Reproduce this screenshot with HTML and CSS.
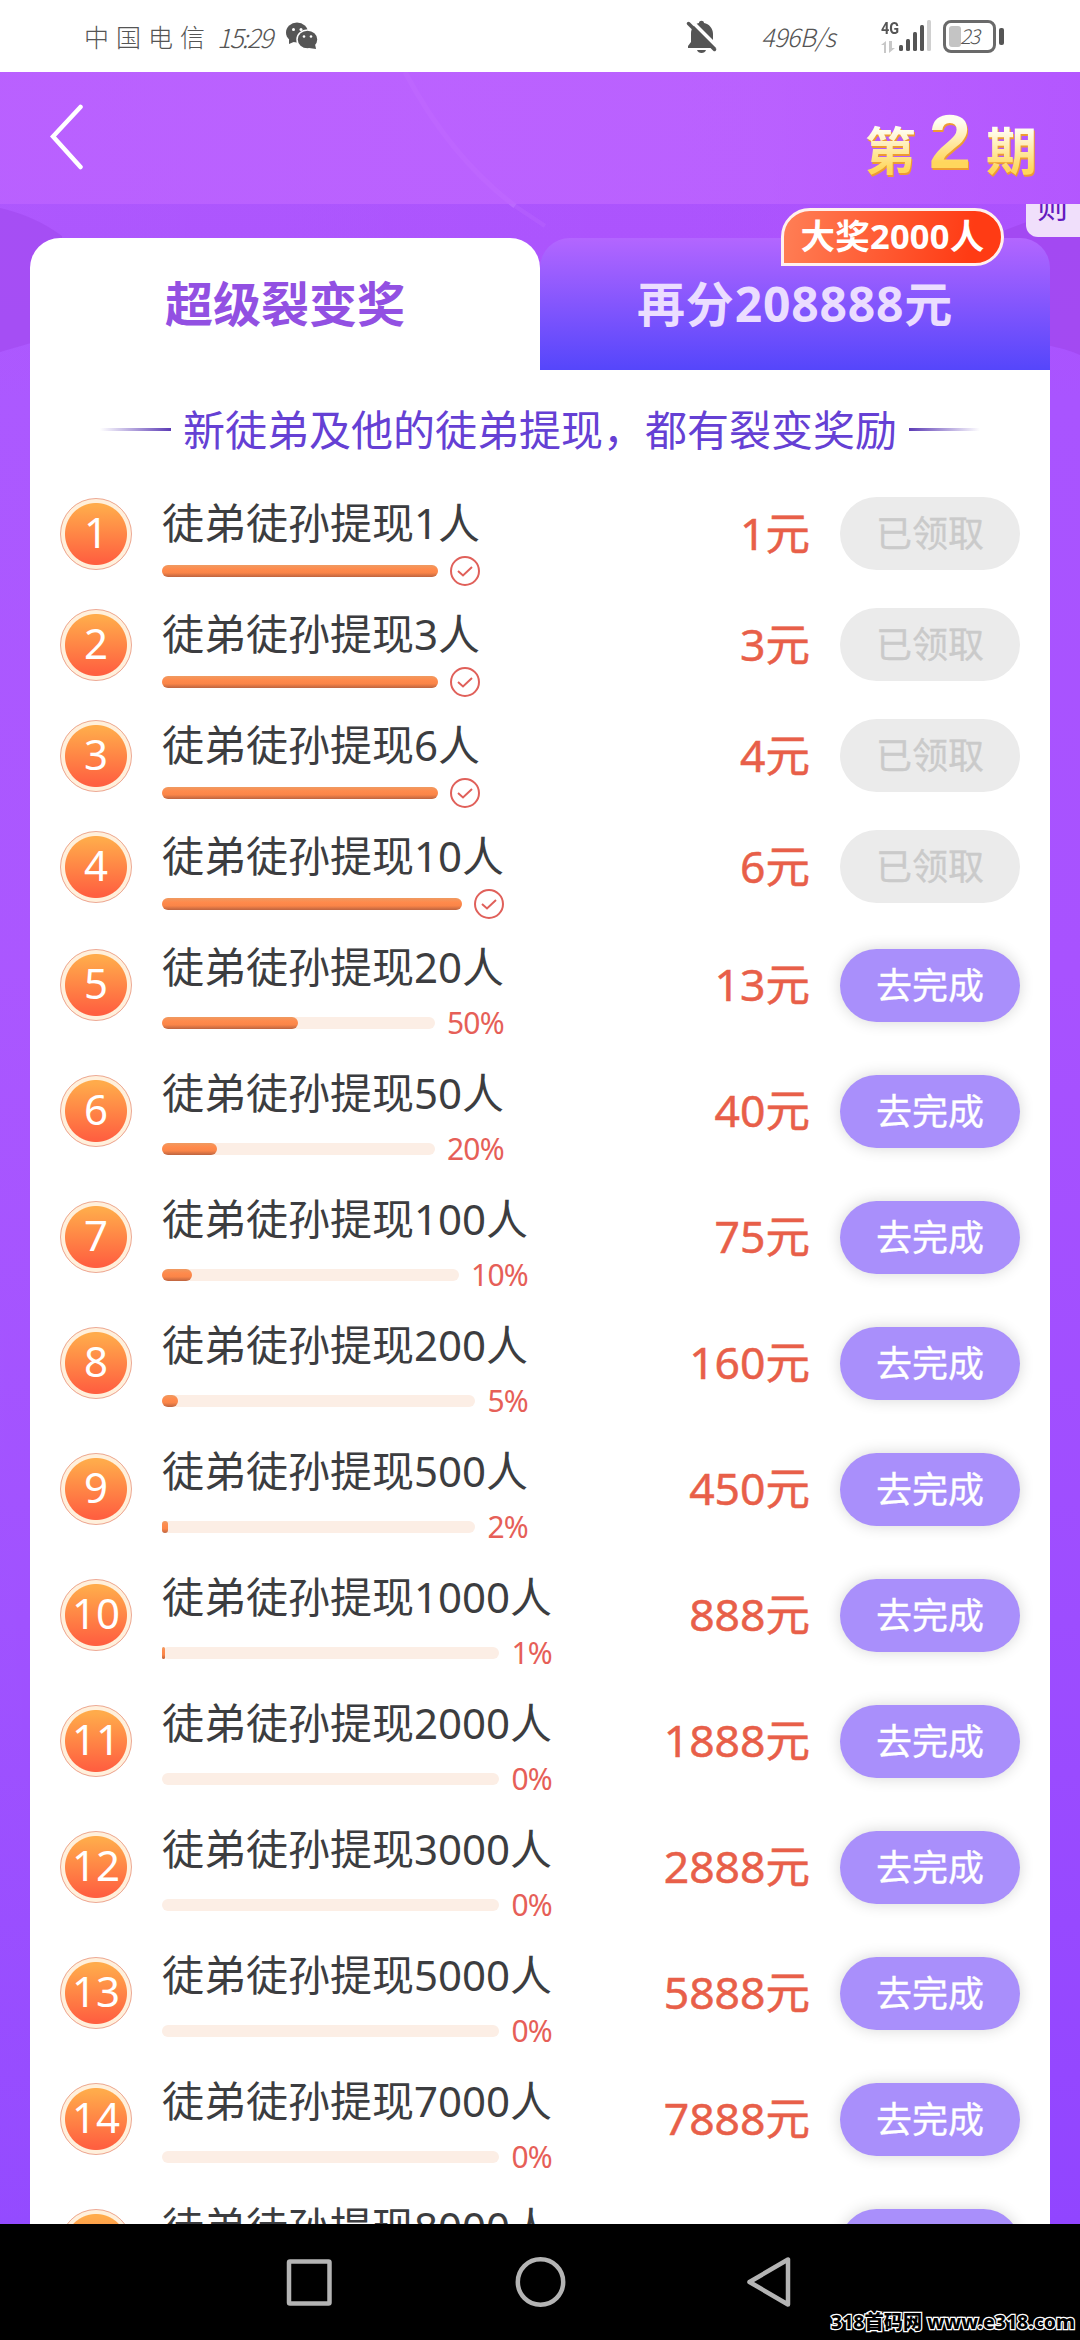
FILE: index.html
```html
<!DOCTYPE html>
<html lang="zh-CN">
<head>
<meta charset="utf-8">
<title>超级裂变奖</title>
<link rel="stylesheet" href="styles.css">
</head>
<body>
<div class="phone">
  <header class="status">
    <span class="carrier">中国电信</span><span class="clock">15:29</span>
    <svg class="wechat" width="34" height="28" viewBox="0 0 34 28"><ellipse cx="12" cy="10.5" rx="11" ry="10"/><path d="M4 17l0 5 7-3z"/><ellipse cx="22.500" cy="17.500" rx="10.500" ry="9.500" stroke="#fff" stroke-width="1.500"/><path d="M24 26l7 1-1-5z"/><g fill="#fff"><circle cx="8.500" cy="7.500" r="1.500"/><circle cx="16" cy="7.500" r="1.500"/><circle cx="19" cy="14.500" r="1.300"/><circle cx="26" cy="14.500" r="1.300"/></g></svg>
    <svg class="bell" width="32" height="34" viewBox="0 0 32 34"><path d="M13 3c0-3 5-3 5 0 5 1 9 5 9 11v8l3 4v2H2v-2l3-4v-8c0-6 3-10 8-11z"/><path d="M11 30h9c-1 4-8 4-9 0z"/><path d="M5.500 1l27 27" stroke="#fff" stroke-width="3.500"/><path d="M2.500 3.500l26 26" stroke="#555" stroke-width="3.500" stroke-linecap="round"/></svg>
    <span class="speed">496B/s</span>
    <span class="net"><b>4G</b><svg width="14" height="12" viewBox="0 0 14 12" fill="#c8c8c8"><path d="M3 12V4H0l5-4v12zM8 0v12l6-5h-3V0z"/></svg></span>
    <svg class="signal" width="34" height="34" viewBox="0 0 34 34"><rect x="1" y="26" width="4" height="6" rx="1.500"/><rect x="8" y="20" width="4" height="12" rx="1.500"/><rect x="15" y="13" width="4" height="19" rx="1.500"/><rect x="22" y="6" width="4" height="26" rx="1.500"/><rect x="29" y="1" width="4" height="31" rx="1.500" fill="#d0d0d0"/></svg>
    <span class="battery"><i></i><em>23</em></span><span class="tip"></span>
  </header>
  <main class="page">
    <svg class="swirl" width="1080" height="620" viewBox="0 0 1080 620"><path d="M0 136Q35 144 62 164L62 262L0 280z" fill="#a34bf0" opacity=".75"/><path d="M405 0Q450 85 515 134" fill="none" stroke="#c67aff" stroke-width="5" opacity=".55"/><path d="M515 134L545 154" fill="none" stroke="#c67aff" stroke-width="4" opacity=".2"/><path d="M1000 160L1080 130V283Q1065 276 1040 272z" fill="#a047ee" opacity=".75"/></svg>
    <div class="top">
      <svg class="back" width="34" height="66" viewBox="0 0 34 66"><path d="M30.500 3L3 32.500 30.500 63" fill="none" stroke="#fff" stroke-width="4.500" stroke-linecap="round"/></svg>
      <div class="issue"><span>第</span><b>2</b><span>期</span></div>
    </div>
    <div class="rule"><span>则</span></div>
    <section class="panel">
      <nav class="tabs">
        <div class="tab on">超级裂变奖</div>
        <div class="tab off">再分208888元<span class="prize">大奖2000人</span></div>
      </nav>
      <div class="sub"><i class="l"></i><span>新徒弟及他的徒弟提现，都有裂变奖励</span><i class="r"></i></div>
      <div class="list" id="list"></div>
    </section>
  </main>
  <footer class="nav">
    <svg width="1080" height="116" viewBox="0 0 1080 116" fill="none" stroke="#b4b4b4" stroke-width="4.500" stroke-linejoin="round"><rect x="289" y="37.500" width="40.500" height="42" rx="1"/><circle cx="540.500" cy="58" r="22.700"/><path d="M788 35.500v45L749.500 58z"/></svg>
    <span class="mark">318首码网 www.e318.com</span>
  </footer>
</div>
<script src="list.js"></script>
</body>
</html>
```
FILE: list.js
```javascript
const levels = [
  [1, 1, 100], [3, 3, 100], [6, 4, 100], [10, 6, 100],
  [20, 13, 50], [50, 40, 20], [100, 75, 10], [200, 160, 5],
  [500, 450, 2], [1000, 888, 1], [2000, 1888, 0], [3000, 2888, 0],
  [5000, 5888, 0], [7000, 7888, 0], [8000, 8888, 0]
];
const check = '<svg class="check" width="30" height="30" viewBox="0 0 30 30"><circle cx="15" cy="15" r="14"/><path d="M8 15l5 4.500 9-8.500"/></svg>';
document.getElementById('list').innerHTML = levels.map(([people, money, pct], i) => {
  const done = pct === 100;
  return `<div class="row ${done ? 'done' : 'todo'}">
    <div class="num">${i + 1}</div>
    <div class="info">
      <div class="name">徒弟徒孙提现${people}人</div>
      <div class="meta"><div class="bar"><div class="fill" style="width:${pct}%"></div></div>${done ? check : `<span class="pct">${pct}%</span>`}</div>
    </div>
    <div class="money">${money}元</div>
    <div class="btn">${done ? '已领取' : '去完成'}</div>
  </div>`;
}).join('');
```
FILE: styles.css
```css
* { box-sizing: border-box; }
body { margin: 0; font-family: "Noto Sans", "Noto Sans CJK SC", sans-serif; }
.phone { width: 1080px; height: 2340px; overflow: hidden; display: flex; flex-direction: column; background: #fff; }

/* status bar */
.status { height: 72px; flex: none; display: flex; align-items: center; padding-left: 84px; color: #555; fill: #555; font-family: "Noto Sans CJK SC", sans-serif; font-weight: 300; white-space: nowrap; }
.carrier { width: 133px; font-size: 25px; letter-spacing: 7px; }
.clock { width: 68px; font-size: 26px; font-style: italic; letter-spacing: -1.500px; }
.wechat { flex: none; }
.bell { margin-left: 367px; margin-top: 2px; flex: none; }
.speed { width: 120px; margin-left: 43px; font-size: 25px; font-style: italic; letter-spacing: -.5px; }
.net { width: 19px; display: flex; flex-direction: column; gap: 4px; }
.net b { font: 700 17px/17px "Roboto", sans-serif; transform: scaleX(.85); transform-origin: left; }
.signal { flex: none; margin-left: -2px; }
.battery { width: 53px; height: 33px; margin-left: 11px; border: 3px solid #6a6a6a; border-radius: 8px; display: flex; align-items: center; padding-left: 3px; }
.battery i { width: 12px; height: 21px; background: #c4c4c4; border-radius: 3px; }
.battery em { font-size: 20px; line-height: 20px; letter-spacing: -1.500px; margin-left: -1px; }
.tip { width: 5px; height: 17px; margin-left: 3px; border-radius: 2px; background: #555; }

/* page */
.page { height: 2152px; flex: none; overflow: hidden; position: relative; background: linear-gradient(90deg, rgba(255,255,255,.03), transparent), linear-gradient(#ad54ff 0, #ab52fd 170px, #a954ff 330px, #a852ff 900px, #9d4dff 1550px, #9145ff 2152px); }
.swirl { position: absolute; left: 0; top: 0; }
.top { position: relative; height: 132px; display: flex; justify-content: space-between; padding: 32px 43px 0 50px; background: linear-gradient(90deg, rgba(187,98,255,.85), rgba(190,101,255,.8) 40%, rgba(190,101,255,.75) 70%, rgba(181,88,255,.8)); }
.issue { display: flex; align-items: baseline; font-weight: 700; line-height: 80px; margin-top: 0; }
.issue span, .issue b { background: linear-gradient(#fffdf0 25%, #ffd75c 75%); -webkit-background-clip: text; background-clip: text; color: transparent; filter: drop-shadow(1px 2px 0 #ee9b32); }
.issue span { font-size: 51px; }
.issue b { font: 700 76px/80px "Liberation Sans", sans-serif; margin: 0 15px 0 13px; position: relative; top: -2px; }
.rule { position: absolute; right: 0; top: 132px; width: 54px; height: 33px; overflow: hidden; border-radius: 0 0 0 12px; background: #f0dffb; color: #641abf; font-size: 31px; line-height: 36px; padding-left: 11px; }
.rule span { display: block; margin-top: -16px; }
.panel { position: relative; margin: 34px 30px 0; height: 2000px; background: linear-gradient(transparent 131px, #fff 131px); }
.tabs { display: flex; height: 132px; }
.tab { flex: 1; font-weight: 700; font-size: 48px; line-height: 132px; text-align: center; border-radius: 30px 30px 0 0; position: relative; }
.on { background: #fff; color: #9250e2; }
.off { background: linear-gradient(#b366ff, #5546fb); color: #ebddff; letter-spacing: .8px; }
.prize { position: absolute; left: 241px; top: -30px; width: 223px; height: 58px; border: 3px solid #fff0ee; border-radius: 29px 29px 29px 0; background: linear-gradient(100deg, #ff7f56, #ff3b14 85%); color: #fff; font-size: 34.500px; line-height: 50px; letter-spacing: .2px; white-space: nowrap; }
.sub { display: flex; height: 111px; align-items: center; justify-content: center; gap: 12px; padding: 8px 0 0; color: #6540d4; font-size: 42px; white-space: nowrap; }
.sub span { margin-top: -4px; }
.sub i { width: 71px; height: 3px; }
.l { background: linear-gradient(90deg, transparent, #5c3bb5); }
.r { background: linear-gradient(90deg, #5c3bb5, transparent); }

/* levels */
.list { padding: 0 30px; }
.row { display: flex; align-items: center; }
.done { height: 105px; margin-bottom: 6px; }
.todo { height: 120px; margin-bottom: 6px; }
.num { width: 72px; height: 72px; flex: none; border-radius: 50%; border: 1.500px solid #eda994; background: radial-gradient(circle closest-side, transparent 30.500px, #fff0dc 31.500px), linear-gradient(#ffab4b 10%, #ff6040 90%); color: #fff; font-size: 42px; line-height: 66px; text-align: center; }
.info { margin-left: 30px; align-self: flex-start; }
.name { height: 75px; padding-top: 9px; font-size: 42px; line-height: 65px; color: #3c3d40; white-space: nowrap; }
.meta { display: flex; align-items: center; gap: 12px; height: 30px; }
.todo .meta { height: 45px; }
.bar { flex: 1; height: 12px; border-radius: 6px; background: #fceee5; }
.fill { height: 12px; border-radius: 6px; background: linear-gradient(#ef9a61, #ff8a4c 35%, #fa8548 65%, #bd6440); }
.check { fill: none; stroke: #e0605a; stroke-width: 2; flex: none; }
.pct { color: #e65f58; font-size: 30px; letter-spacing: -.7px; line-height: 44px; }
.money { margin-left: auto; margin-right: 30px; color: #e85f49; font-size: 44.500px; font-weight: 400; -webkit-text-stroke: .5px #e85f49; line-height: 70px; padding-bottom: 2px; }
.btn { width: 180px; height: 73px; flex: none; border-radius: 37px; text-align: center; font-size: 36px; line-height: 73px; background: #ebebeb; color: #cacaca; font-weight: 400; -webkit-text-stroke: .3px; }
.todo .btn { background: #a98ffb; color: #fff; box-shadow: 0 0 15px rgba(0,0,0,.16); }

/* system navigation */
.nav { height: 116px; flex: none; background: #000; position: relative; }
.mark { position: absolute; right: 5px; bottom: 4px; font-size: 19.300px; line-height: 28px; font-weight: 800; color: #000; -webkit-text-stroke: 2.500px #fff; paint-order: stroke fill; white-space: nowrap; }
```
